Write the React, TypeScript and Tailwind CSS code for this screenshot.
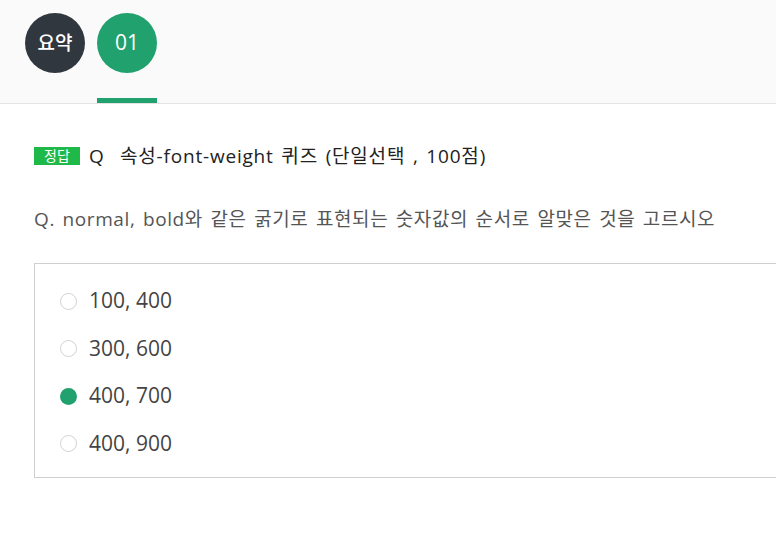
import { useState } from "react";

const options = ["100, 400", "300, 600", "400, 700", "400, 900"];

export default function App() {
  const [selected, setSelected] = useState(2);

  return (
    <div
      className="w-[776px] h-[536px] overflow-hidden bg-white"
      style={{ fontFamily: '"Open Sans", "Noto Sans CJK KR", sans-serif' }}
    >
      {/* tab header */}
      <div className="h-[104px] bg-[#fafafa] border-b border-[#e3e3e3] flex items-start gap-3 pl-[25px] pt-[13px]">
        <div className="w-[60px] h-[60px] rounded-full bg-[#31373e] text-white text-[19px] font-medium flex items-center justify-center">
          요약
        </div>
        <div className="flex flex-col items-center h-full justify-between">
          <div className="w-[60px] h-[60px] rounded-full bg-[#21a16d] text-white text-[21px] flex items-center justify-center">
            01
          </div>
          <div className="w-[60px] h-[5px] bg-[#21a16d]" />
        </div>
      </div>

      <div className="pl-[34px] pt-[40px]">
        <div className="flex items-center text-[19px] text-[#222] h-[24px]">
          <span className="w-[46px] h-[18px] bg-[#1fb94a] text-white text-[14px] leading-[18px] text-center mr-[9px]">정답</span>
          <span className="tracking-[0.8px] [word-spacing:2px]">Q&nbsp;&nbsp;속성-font-weight 퀴즈 (단일선택 , 100점)</span>
        </div>

        <p className="mt-[39px] text-[19px] text-[#555] leading-[24px] tracking-[0.6px] [word-spacing:2px] whitespace-nowrap">
          Q. normal, bold와 같은 굵기로 표현되는 숫자값의 순서로 알맞은 것을 고르시오
        </p>

        <div className="mt-[32px] w-[760px] h-[215px] border border-[#cfcfcf] pl-[25px] pt-[25px] flex flex-col gap-[23.5px]">
          {options.map((opt, i) => (
            <label key={opt} className="flex items-center gap-[12px] cursor-pointer h-[24px]" onClick={() => setSelected(i)}>
              <span
                className={
                  i === selected
                    ? "w-[17px] h-[17px] rounded-full bg-[#21a16d]"
                    : "w-[17px] h-[17px] rounded-full border border-[#cdd3d6] bg-white"
                }
              />
              <span className="text-[21px] text-[#444]">{opt}</span>
            </label>
          ))}
        </div>
      </div>
    </div>
  );
}
